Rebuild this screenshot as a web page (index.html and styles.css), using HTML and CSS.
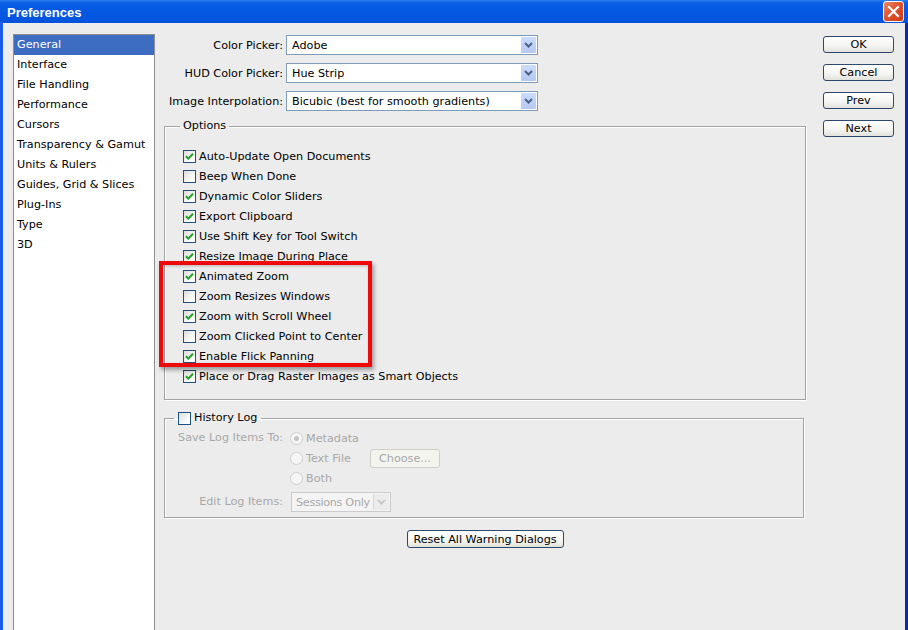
FILE: index.html
```html
<!DOCTYPE html>
<html>
<head>
<meta charset="utf-8">
<title>Preferences</title>
<link rel="stylesheet" href="styles.css">
</head>
<body>
<div class="window">
  <div class="titlebar">
    <span class="title">Preferences</span>
    <span class="close">
      <svg width="13" height="13" viewBox="0 0 13 13"><path d="M2 2 L11 11 M11 2 L2 11" stroke="#fff" stroke-width="2.2" stroke-linecap="square"/></svg>
    </span>
  </div>
  <div class="frame">
    <ul class="catlist">
      <li class="sel">General</li>
      <li>Interface</li>
      <li>File Handling</li>
      <li>Performance</li>
      <li>Cursors</li>
      <li>Transparency &amp; Gamut</li>
      <li>Units &amp; Rulers</li>
      <li>Guides, Grid &amp; Slices</li>
      <li>Plug-Ins</li>
      <li>Type</li>
      <li>3D</li>
    </ul>

    <div class="main">
      <div class="pickers">
        <div class="field">
          <span class="flabel">Color Picker:</span>
          <div class="select"><span class="sval">Adobe</span><span class="sbtn"><svg width="9" height="6" viewBox="0 0 9 6"><path d="M1 1 L4.5 4.5 L8 1" fill="none" stroke="#4d6185" stroke-width="2"/></svg></span></div>
        </div>
        <div class="field">
          <span class="flabel">HUD Color Picker:</span>
          <div class="select"><span class="sval">Hue Strip</span><span class="sbtn"><svg width="9" height="6" viewBox="0 0 9 6"><path d="M1 1 L4.5 4.5 L8 1" fill="none" stroke="#4d6185" stroke-width="2"/></svg></span></div>
        </div>
        <div class="field">
          <span class="flabel">Image Interpolation:</span>
          <div class="select"><span class="sval">Bicubic (best for smooth gradients)</span><span class="sbtn"><svg width="9" height="6" viewBox="0 0 9 6"><path d="M1 1 L4.5 4.5 L8 1" fill="none" stroke="#4d6185" stroke-width="2"/></svg></span></div>
        </div>
      </div>

      <fieldset class="group options">
        <legend>Options</legend>
        <div class="check on"><span class="cb"><svg viewBox="0 0 11 11"><path d="M2 5.2 L4.3 7.6 L9 2.8" fill="none" stroke="#21a121" stroke-width="2"/></svg></span>Auto-Update Open Documents</div>
        <div class="check"><span class="cb"></span>Beep When Done</div>
        <div class="check on"><span class="cb"><svg viewBox="0 0 11 11"><path d="M2 5.2 L4.3 7.6 L9 2.8" fill="none" stroke="#21a121" stroke-width="2"/></svg></span>Dynamic Color Sliders</div>
        <div class="check on"><span class="cb"><svg viewBox="0 0 11 11"><path d="M2 5.2 L4.3 7.6 L9 2.8" fill="none" stroke="#21a121" stroke-width="2"/></svg></span>Export Clipboard</div>
        <div class="check on"><span class="cb"><svg viewBox="0 0 11 11"><path d="M2 5.2 L4.3 7.6 L9 2.8" fill="none" stroke="#21a121" stroke-width="2"/></svg></span>Use Shift Key for Tool Switch</div>
        <div class="check on"><span class="cb"><svg viewBox="0 0 11 11"><path d="M2 5.2 L4.3 7.6 L9 2.8" fill="none" stroke="#21a121" stroke-width="2"/></svg></span>Resize Image During Place</div>
        <div class="check on"><span class="cb"><svg viewBox="0 0 11 11"><path d="M2 5.2 L4.3 7.6 L9 2.8" fill="none" stroke="#21a121" stroke-width="2"/></svg></span>Animated Zoom</div>
        <div class="check"><span class="cb"></span>Zoom Resizes Windows</div>
        <div class="check on"><span class="cb"><svg viewBox="0 0 11 11"><path d="M2 5.2 L4.3 7.6 L9 2.8" fill="none" stroke="#21a121" stroke-width="2"/></svg></span>Zoom with Scroll Wheel</div>
        <div class="check"><span class="cb"></span>Zoom Clicked Point to Center</div>
        <div class="check on"><span class="cb"><svg viewBox="0 0 11 11"><path d="M2 5.2 L4.3 7.6 L9 2.8" fill="none" stroke="#21a121" stroke-width="2"/></svg></span>Enable Flick Panning</div>
        <div class="check on"><span class="cb"><svg viewBox="0 0 11 11"><path d="M2 5.2 L4.3 7.6 L9 2.8" fill="none" stroke="#21a121" stroke-width="2"/></svg></span>Place or Drag Raster Images as Smart Objects</div>
      </fieldset>

      <fieldset class="group history">
        <legend><span class="cb"></span>History Log</legend>
        <div class="hgrid">
          <span class="hlabel">Save Log Items To:</span>
          <div class="radio"><span class="rb on"></span>Metadata</div>
          <span></span>
          <div class="radio"><span class="rb"></span><span class="rtext">Text File</span><span class="btn disabled choose">Choose...</span></div>
          <span></span>
          <div class="radio"><span class="rb"></span>Both</div>
          <span class="hlabel editlabel">Edit Log Items:</span>
          <div class="select small disabled"><span class="sval">Sessions Only</span><span class="sbtn"><svg width="9" height="6" viewBox="0 0 9 6"><path d="M1 1 L4.5 4.5 L8 1" fill="none" stroke="#c8c8c8" stroke-width="2"/></svg></span></div>
        </div>
      </fieldset>

      <div class="resetrow">
        <span class="btn reset">Reset All Warning Dialogs</span>
      </div>

      <div class="highlight"></div>
    </div>

    <div class="actions">
      <span class="btn">OK</span>
      <span class="btn">Cancel</span>
      <span class="btn">Prev</span>
      <span class="btn">Next</span>
    </div>
  </div>
</div>
</body>
</html>
```

FILE: styles.css
```css
html, body {
  margin: 0;
  padding: 0;
  background: #ececec;
  overflow: hidden;
}

.window {
  width: 908px;
  height: 630px;
  display: flex;
  flex-direction: column;
  font-family: "DejaVu Sans", Tahoma, sans-serif;
  font-size: 11.2px;
  color: #000;
  overflow: hidden;
}

.titlebar {
  height: 23px;
  flex: none;
  display: flex;
  align-items: center;
  justify-content: space-between;
  padding: 0 4px 0 7px;
  background: linear-gradient(#2d7ef2 0px, #0a5fe4 3px, #0558e2 50%, #0452dc 100%);
}

.title {
  font-family: "Liberation Sans", Arial, sans-serif;
  font-weight: bold;
  font-size: 13px;
  color: #fff;
  margin-top: 1px;
}

.close {
  width: 19px;
  height: 19px;
  margin-top: -1px;
  display: flex;
  align-items: center;
  justify-content: center;
  border: 1px solid #fff;
  border-radius: 3px;
  background: linear-gradient(135deg, #f08a6a 0%, #e0552f 45%, #c93a16 100%);
}

.frame {
  flex: 1;
  display: flex;
  align-items: flex-start;
  padding-top: 11px;
  border-left: 3px solid #1a5ae8;
  border-right: 3px solid #0c2b9c;
  background: #ececec;
  min-height: 0;
}

.catlist {
  list-style: none;
  margin: 0 0 0 10px;
  padding: 0;
  width: 140px;
  height: 640px;
  flex: none;
  background: #fff;
  border: 1px solid #8e8e8e;
}

.catlist li {
  height: 20px;
  line-height: 20px;
  padding-left: 3px;
  white-space: nowrap;
}

.catlist li.sel {
  background: #3d6cc3;
  color: #fff;
}

.main {
  position: relative;
  width: 642px;
  margin-left: 9px;
  padding-top: 1px;
  flex: none;
}

.pickers {
  display: flex;
  flex-direction: column;
  gap: 8px;
}

.field {
  display: flex;
  align-items: center;
  height: 20px;
}

.flabel {
  width: 119px;
  text-align: right;
  white-space: nowrap;
}

.select {
  margin-left: 3px;
  width: 252px;
  height: 20px;
  box-sizing: border-box;
  border: 1px solid #7f9db9;
  background: #fff;
  display: flex;
  align-items: center;
  justify-content: space-between;
  padding: 1px;
}

.sval {
  padding-left: 4px;
  white-space: nowrap;
  overflow: hidden;
}

.sbtn {
  width: 15px;
  height: 16px;
  flex: none;
  display: flex;
  align-items: center;
  justify-content: center;
  background: linear-gradient(#cddcfc, #b3c8f4);
  border-radius: 1px;
}

.group {
  margin: 0;
  min-width: 0;
  border: 1px solid #a3a3a3;
  box-shadow: 1px 1px 0 #fff, inset 1px 1px 0 #fff;
}

.group legend {
  line-height: 14px;
  height: 14px;
  white-space: nowrap;
}

.options {
  margin-top: 8px;
  padding: 13px 10px 13px 18px;
}

.options legend {
  margin-left: -3px;
  padding: 0 3px;
}

.check {
  height: 20px;
  display: flex;
  align-items: center;
  gap: 3px;
  white-space: nowrap;
}

.cb {
  width: 13px;
  height: 13px;
  box-sizing: border-box;
  border: 1px solid #1c5180;
  background: linear-gradient(135deg, #dcdcd7 0%, #fff 80%);
  display: inline-flex;
  flex: none;
}

.cb svg {
  width: 11px;
  height: 11px;
}

.history {
  width: 640px;
  box-sizing: border-box;
  margin-top: 11px;
  padding: 3px 10px 5px 5px;
}

.history legend {
  display: flex;
  align-items: center;
  gap: 3px;
  margin-left: 4px;
  padding: 0 4px;
}

.hgrid {
  display: grid;
  grid-template-columns: 113px 1fr;
  grid-template-rows: 20px 20px 20px 24px;
  column-gap: 7px;
  color: #a8a8a8;
}

.hlabel {
  text-align: right;
  line-height: 20px;
  white-space: nowrap;
}

.editlabel,
.hgrid .select.small {
  margin-top: 4px;
}

.radio {
  display: flex;
  align-items: center;
  gap: 3px;
  white-space: nowrap;
}

.rtext {
  width: 61px;
}

.rb {
  width: 13px;
  height: 13px;
  box-sizing: border-box;
  border-radius: 50%;
  border: 1px solid #cfcfcf;
  background: #f6f6f6;
  display: inline-flex;
  align-items: center;
  justify-content: center;
  flex: none;
}

.rb.on::after {
  content: "";
  width: 5px;
  height: 5px;
  border-radius: 50%;
  background: #c4c4c4;
}

.select.small {
  margin-left: 1px;
  width: 100px;
  padding: 1px 1px 1px 0;
}

.select.disabled {
  border-color: #cbcbcb;
  background: #f4f4f4;
  color: #a8a8a8;
}

.select.small .sval {
  padding-left: 4px;
  letter-spacing: -0.3px;
}

.select.disabled .sbtn {
  background: #ececec;
  border-left: 1px solid #d8d8d8;
}

.btn {
  display: inline-flex;
  align-items: center;
  justify-content: center;
  box-sizing: border-box;
  height: 18px;
  border: 1px solid #2c4a6e;
  border-radius: 3px;
  background: linear-gradient(#ffffff 0%, #f4f4f2 60%, #e2e2dc 100%);
  white-space: nowrap;
}

.btn.disabled {
  border-color: #cfcfc4;
  background: #f4f4ee;
  color: #a8a8a8;
}

.choose {
  width: 70px;
  height: 19px;
}

.resetrow {
  display: flex;
  justify-content: center;
  margin-top: 12px;
}

.reset {
  width: 157px;
}

.actions {
  margin-left: 17px;
  margin-top: 2px;
  width: 71px;
  display: flex;
  flex-direction: column;
  gap: 11px;
}

.actions .btn {
  height: 17px;
}

.highlight {
  position: absolute;
  left: -5px;
  top: 227px;
  width: 213px;
  height: 106px;
  box-sizing: border-box;
  border: 4px solid #ee0a0a;
  box-shadow: 2px 3px 4px rgba(0, 0, 0, 0.35), inset 1px 1px 3px rgba(0, 0, 0, 0.25);
  pointer-events: none;
}
```
